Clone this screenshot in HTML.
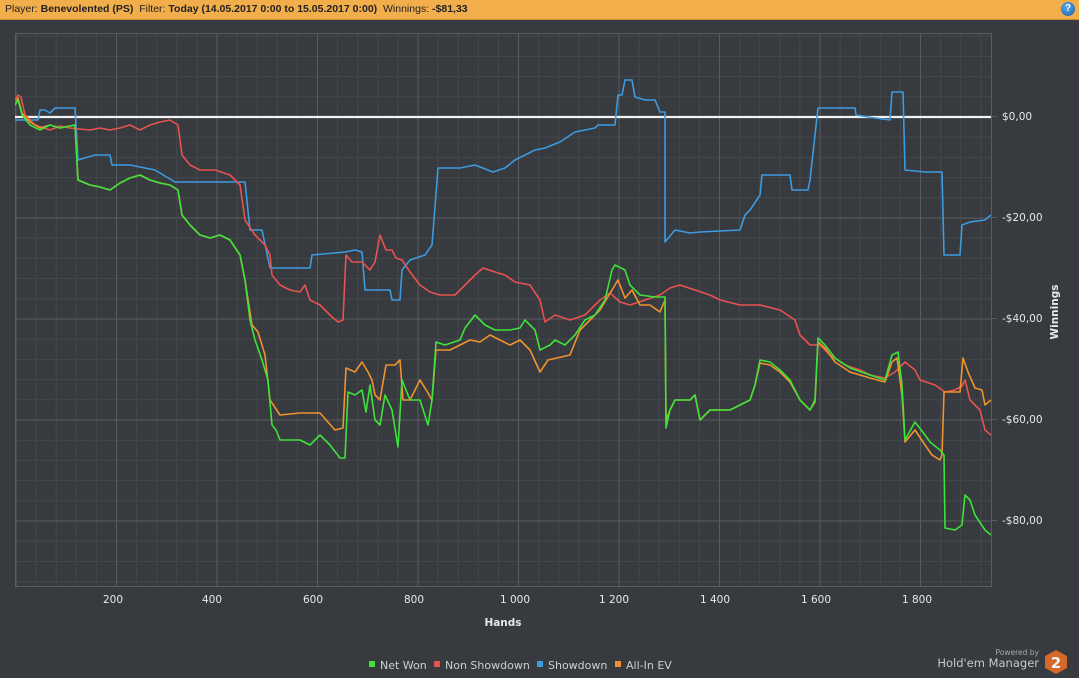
<!DOCTYPE html>
<html><head><meta charset="utf-8"><style>
html,body{margin:0;padding:0;width:1079px;height:678px;overflow:hidden;background:#373a3e;font-family:"DejaVu Sans","Liberation Sans",sans-serif;}
.hdr{position:absolute;left:0;top:0;width:1079px;height:19px;background:#f2ae4a;border-bottom:1px solid #c98a2e;font-size:10.5px;line-height:19px;color:#222;white-space:nowrap;font-family:"Liberation Sans",sans-serif}
.hdr span{padding-left:5px}
.hdr b{font-weight:bold}
.help{position:absolute;right:4px;top:2px;width:14px;height:14px;border-radius:50%;background:radial-gradient(circle at 40% 35%,#5aa6e8,#1a5fa8);color:#fff;font-size:10px;font-weight:bold;text-align:center;line-height:14px}
</style></head><body>
<div class="hdr"><span>Player: <b>Benevolented (PS)</b>&nbsp; Filter: <b>Today (14.05.2017 0:00 to 15.05.2017 0:00)</b>&nbsp; Winnings: <b>-$81,33</b></span><div class="help">?</div></div>
<svg width="1079" height="678" style="position:absolute;left:0;top:0" xmlns="http://www.w3.org/2000/svg">
<defs>
<pattern id="mv" x="15.5" y="0" width="20.1" height="10" patternUnits="userSpaceOnUse"><line x1="0.5" y1="0" x2="0.5" y2="10" stroke="#44474b" stroke-width="1"/></pattern>
<pattern id="mh" x="0" y="15.5" width="10" height="20.2" patternUnits="userSpaceOnUse"><line x1="0" y1="0.5" x2="10" y2="0.5" stroke="#44474b" stroke-width="1"/></pattern>
<pattern id="Mv" x="15.5" y="0" width="100.5" height="10" patternUnits="userSpaceOnUse"><line x1="0.5" y1="0" x2="0.5" y2="10" stroke="#595c60" stroke-width="1"/></pattern>
<pattern id="Mh" x="0" y="15.5" width="10" height="101" patternUnits="userSpaceOnUse"><line x1="0" y1="0.5" x2="10" y2="0.5" stroke="#595c60" stroke-width="1"/></pattern>
<clipPath id="pc"><rect x="15" y="33" width="976" height="553"/></clipPath>
</defs>
<rect x="15" y="33" width="976" height="553" fill="url(#mv)"/>
<rect x="15" y="33" width="976" height="553" fill="url(#mh)"/>
<rect x="15" y="33" width="976" height="553" fill="url(#Mv)"/>
<rect x="15" y="33" width="976" height="553" fill="url(#Mh)"/>
<rect x="15.5" y="33.5" width="976" height="553" fill="none" stroke="#5a5d61"/>
<g stroke="#5a5d61"><line x1="991" y1="116.5" x2="997" y2="116.5"/><line x1="991" y1="217.5" x2="997" y2="217.5"/><line x1="991" y1="318.5" x2="997" y2="318.5"/><line x1="991" y1="419.5" x2="997" y2="419.5"/><line x1="991" y1="520.5" x2="997" y2="520.5"/></g>
<g clip-path="url(#pc)" fill="none" stroke-width="1.6" stroke-linejoin="round">
<line x1="15" y1="117" x2="991" y2="117" stroke="#f2f2f2" stroke-width="2.2"/>
<polyline stroke="#3d9be0" points="15,120 30,120 38,120 40,110 45,110 50,113 55,108 75,108 78,160 95,155 110,155 112,165 130,165 155,170 175,182 195,182 215,182 245,182 250,230 262,230 270,268 310,268 312,255 345,252 355,250 362,252 365,290 390,290 392,300 400,300 402,270 410,260 425,255 432,245 438,168 460,168 475,165 493,172 505,168 515,160 525,155 535,150 545,148 560,142 575,132 595,128 598,125 615,125 618,95 622,95 625,80 632,80 635,97 645,100 655,100 660,112 665,112 665,242 675,230 690,233 700,232 740,230 745,215 750,210 760,195 762,175 790,175 792,190 808,190 810,180 818,108 855,108 856,115 875,118 890,120 892,92 903,92 905,170 925,172 942,172 944,255 960,255 962,225 970,222 985,220 991,215"/>
<polyline stroke="#e8524f" points="15,100 18,95 21,97 25,115 35,125 50,130 60,126 70,128 90,130 100,128 110,130 120,128 130,125 140,130 150,125 160,122 170,120 178,125 182,155 190,165 200,170 215,170 230,175 240,185 245,220 255,235 265,245 270,255 272,275 280,285 290,290 300,292 305,285 310,300 320,305 330,315 338,322 343,320 346,255 352,262 362,262 370,270 375,262 380,235 386,250 392,250 396,258 402,260 410,272 420,285 430,292 440,295 455,295 465,285 475,275 483,268 495,272 505,275 515,282 530,285 540,300 545,322 555,315 570,320 585,315 600,300 610,293 620,302 630,305 645,300 660,295 670,288 680,285 695,290 710,295 720,300 740,305 760,305 780,310 795,320 800,335 810,345 820,345 830,355 845,365 860,370 870,375 885,378 895,372 905,362 915,370 920,380 935,385 945,392 955,390 962,386 965,380 970,400 975,405 980,410 985,430 991,435"/>
<polyline stroke="#f0922e" points="15,105 18,98 22,113 30,122 40,128 50,125 60,128 75,125 78,180 90,185 100,187 110,190 120,183 130,178 140,175 150,180 160,183 170,185 178,190 182,215 190,225 200,235 210,238 220,235 230,240 240,255 245,280 252,325 258,332 265,355 270,400 280,415 300,413 320,413 335,430 343,428 346,368 355,372 362,362 368,372 372,380 375,395 380,400 386,365 395,365 400,360 403,400 410,400 420,380 428,393 432,400 436,350 450,350 470,340 480,342 490,335 510,345 520,340 530,350 540,372 548,360 570,355 580,330 600,310 612,290 618,280 625,298 632,290 640,305 650,305 660,312 665,300 666,420 670,410 675,400 690,400 695,395 700,420 710,410 730,410 740,405 750,400 755,385 760,363 770,365 780,372 790,382 800,400 810,410 815,402 818,342 825,348 835,362 850,372 870,378 885,382 892,362 897,358 902,395 905,442 915,430 925,445 932,455 940,460 942,455 944,392 960,392 963,358 968,372 975,388 982,390 985,405 991,400"/>
<polyline stroke="#3ee23a" points="15,105 18,100 22,115 30,125 40,130 50,125 60,128 75,125 78,180 90,185 100,187 110,190 120,183 130,178 140,175 150,180 160,183 170,185 178,190 182,215 190,225 200,235 210,238 220,235 230,240 240,255 245,280 250,320 255,340 262,360 268,380 272,425 276,430 280,440 290,440 300,440 310,445 320,435 330,445 340,458 345,458 348,392 355,395 362,390 366,412 370,385 375,420 380,425 385,395 392,410 398,447 402,380 410,400 420,400 428,425 432,400 436,342 445,345 460,340 465,328 475,315 485,325 495,330 510,330 520,328 525,320 535,330 540,350 550,345 555,340 565,345 575,335 585,320 595,315 605,300 612,270 615,265 625,270 630,285 640,295 655,297 665,297 666,428 670,410 675,400 690,400 695,395 700,420 710,410 730,410 740,405 750,400 755,385 760,360 770,362 780,370 790,380 800,400 810,410 815,400 818,338 825,345 835,358 850,368 870,375 885,380 892,355 898,352 902,385 905,440 915,422 925,435 930,442 940,450 944,455 945,528 955,530 962,525 965,495 970,500 975,515 985,530 991,535"/>
</g>
<g fill="#e8e8e8" font-size="10.5" font-family="DejaVu Sans, Liberation Sans, sans-serif">
<text x="1002" y="120">$0,00</text>
<text x="1002" y="221">-$20,00</text>
<text x="1002" y="322">-$40,00</text>
<text x="1002" y="423">-$60,00</text>
<text x="1002" y="524">-$80,00</text>
<g text-anchor="middle">
<text x="113" y="603">200</text><text x="212" y="603">400</text><text x="313" y="603">600</text><text x="414" y="603">800</text><text x="515" y="603">1 000</text><text x="614" y="603">1 200</text><text x="715" y="603">1 400</text><text x="816" y="603">1 600</text><text x="917" y="603">1 800</text>
</g>
<text x="503" y="626" text-anchor="middle" font-weight="bold" font-size="10.5">Hands</text>
<text transform="translate(1058,312) rotate(-90)" text-anchor="middle" font-weight="bold" font-size="10.5">Winnings</text>
</g>
<g font-size="11" fill="#cfcfcf" font-family="DejaVu Sans, Liberation Sans, sans-serif">
<rect x="369" y="661" width="6" height="6" fill="#3ee23a"/><text x="380" y="669">Net Won</text>
<rect x="434" y="661" width="6" height="6" fill="#e8524f"/><text x="445" y="669">Non Showdown</text>
<rect x="537" y="661" width="6" height="6" fill="#3d9be0"/><text x="548" y="669">Showdown</text>
<rect x="615" y="661" width="6" height="6" fill="#f0922e"/><text x="626" y="669">All-In EV</text>
</g>
<text x="1039" y="655" text-anchor="end" font-size="7.5" fill="#a8a8a8" font-family="DejaVu Sans, sans-serif">Powered by</text>
<text x="1039" y="667" text-anchor="end" font-size="11.5" fill="#c8c8c8" font-family="DejaVu Sans, sans-serif">Hold'em Manager</text>
<polygon points="1056,650 1067,656 1067,668 1056,674 1045,668 1045,656" fill="#d4692a"/>
<text x="1056" y="668" text-anchor="middle" font-size="15" font-weight="bold" fill="#f4f4f4" font-family="DejaVu Sans, sans-serif">2</text>
</svg>
</body></html>
